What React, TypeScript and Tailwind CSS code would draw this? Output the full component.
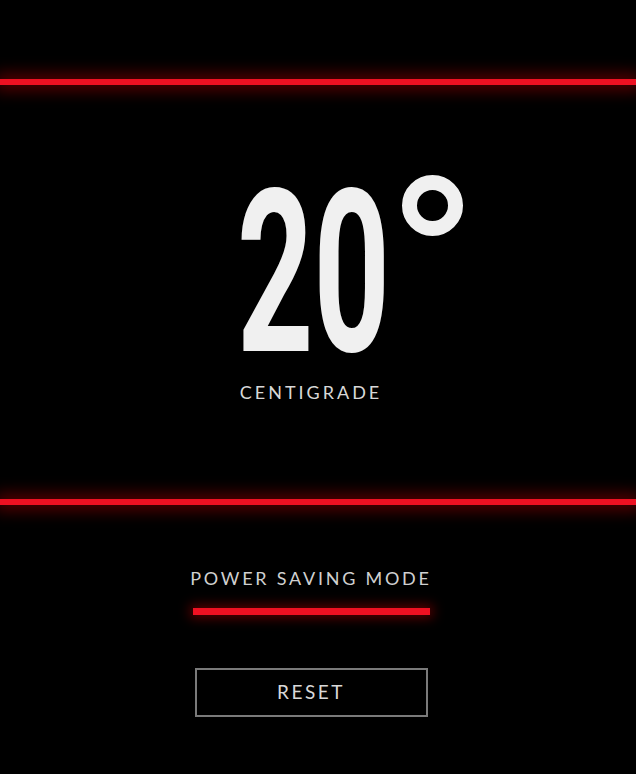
import React from "react";

function GlowLine() {
  return (
    <div className="h-[6px] w-full bg-[#ee1122] shadow-[0_0_16px_5px_rgba(200,0,0,0.45)]" />
  );
}

export default function App() {
  return (
    <div className="min-h-[774px] w-[636px] bg-black overflow-hidden font-['Lato',sans-serif]">
      <div className="h-[79px]" />
      <GlowLine />

      <div className="w-[622px] flex flex-col items-center pt-[90px]">
        <div className="relative h-[182px] w-[146px]">
          <span className="absolute left-[-1px] top-[-14px] origin-left scale-x-[0.59] text-[226px] leading-none font-bold text-[#f0f0f0] font-['Roboto',sans-serif] whitespace-nowrap">
            20
          </span>
          <span className="absolute left-[164px] top-0 w-[61px] h-[61px] rounded-full border-[15px] border-[#f0f0f0]" aria-label="°" />
        </div>
        <div className="mt-[26px] text-[18px] leading-none tracking-[3px] text-[#d8d8d8]">
          CENTIGRADE
        </div>
      </div>

      <div className="h-[98px]" />
      <GlowLine />

      <div className="w-[622px] flex flex-col items-center pt-[64px]">
        <div className="text-[18px] leading-none tracking-[2.75px] text-[#d0d0d0]">
          POWER SAVING MODE
        </div>
        <div className="mt-[21px] h-[7px] w-[237px] bg-[#ee1122] shadow-[0_0_12px_3px_rgba(200,0,0,0.45)]" />
        <button className="mt-[53px] w-[233px] h-[49px] border-2 border-[#7a7a7a] text-[19px] tracking-[2.5px] text-[#d8d8d8] font-['Lato',sans-serif]">
          RESET
        </button>
      </div>
    </div>
  );
}
